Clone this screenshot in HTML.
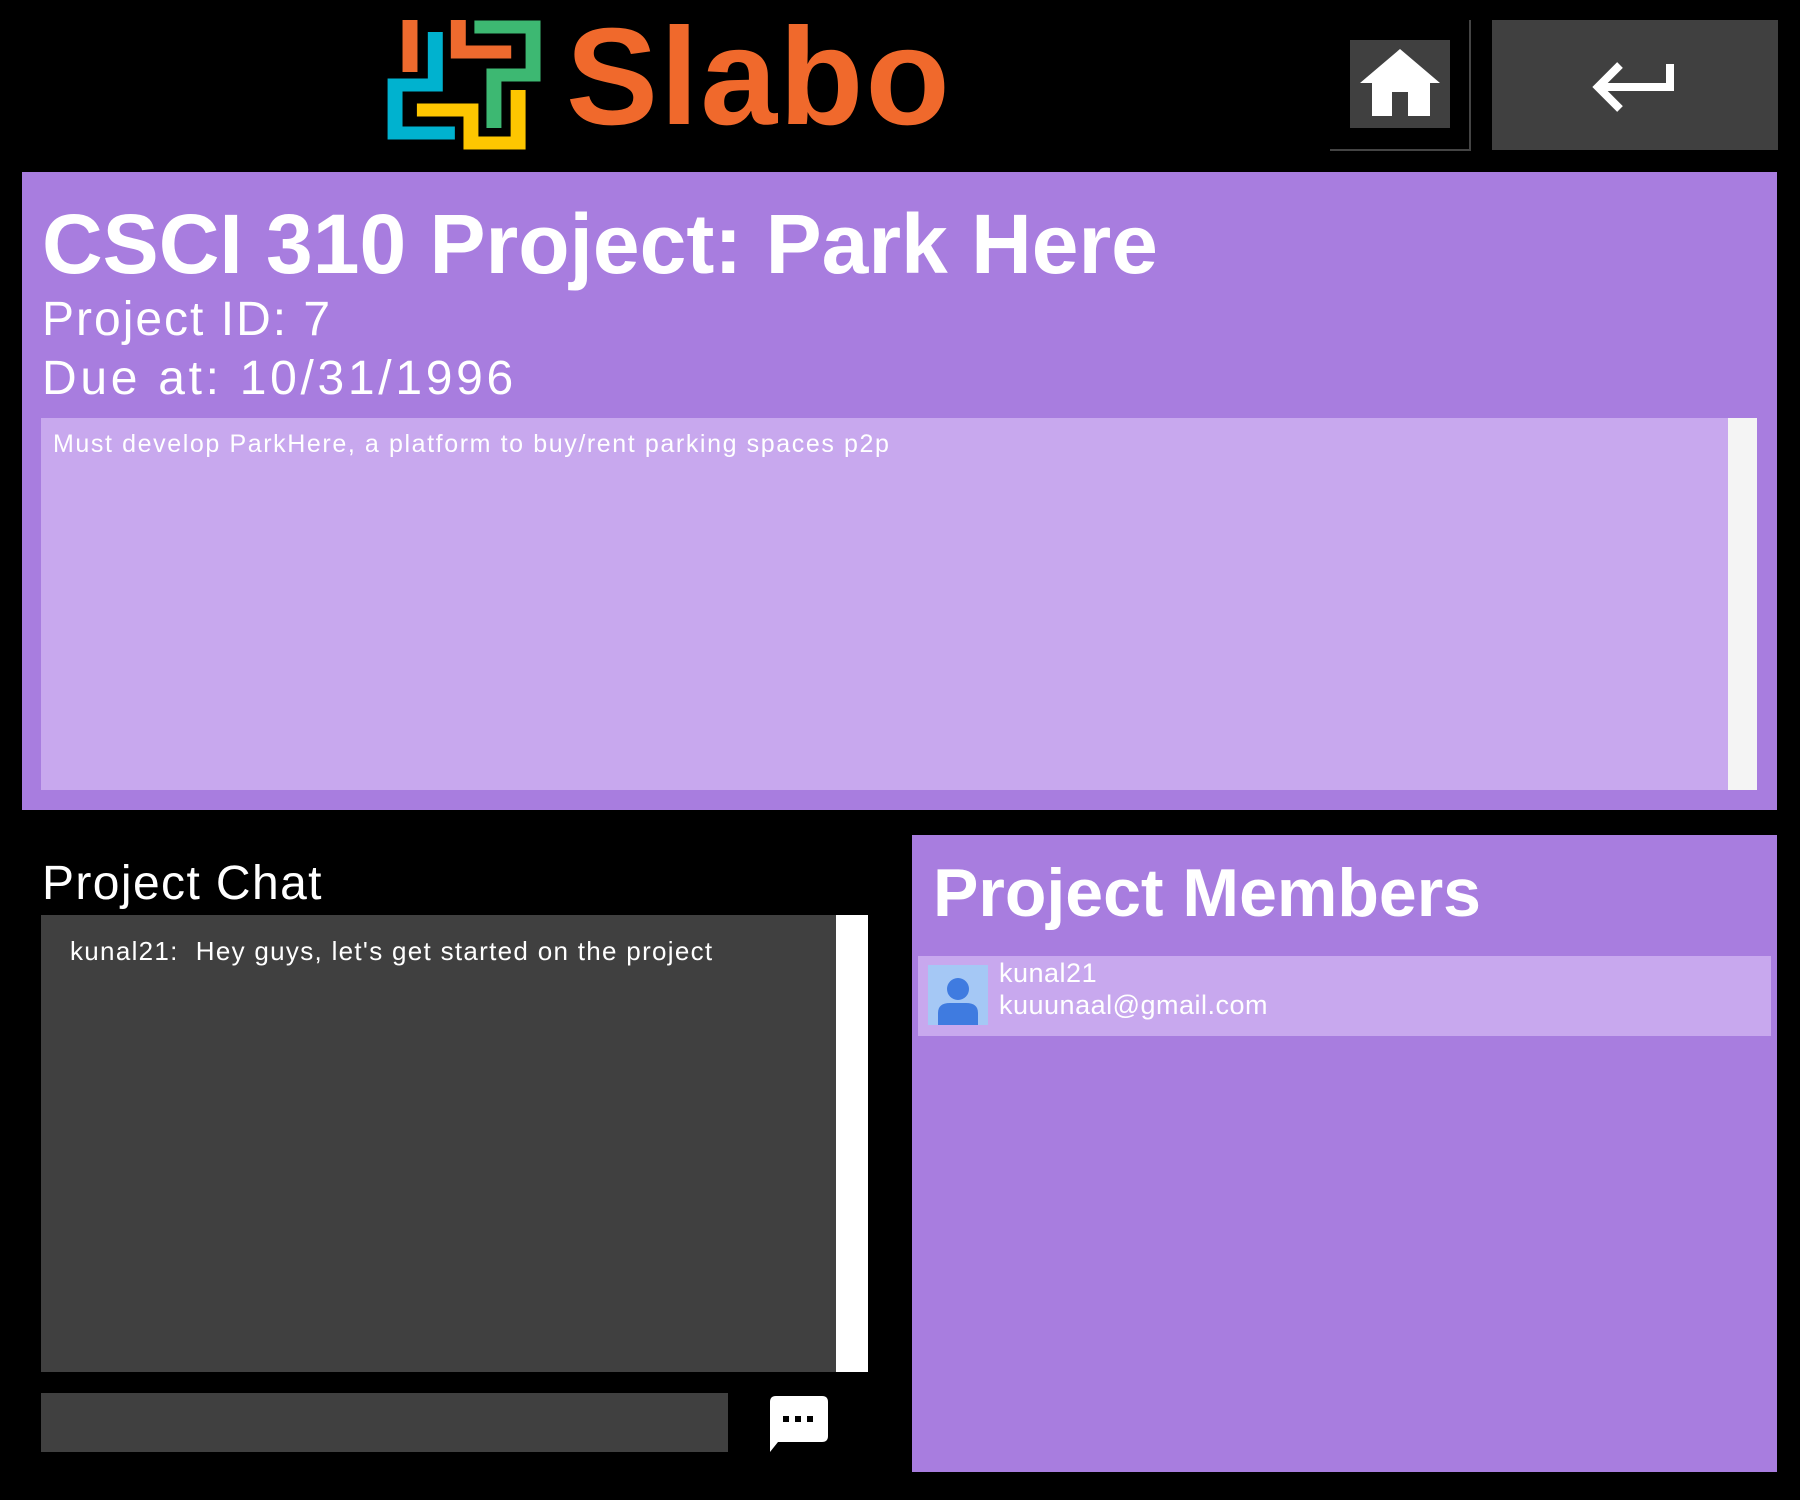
<!DOCTYPE html>
<html><head><meta charset="utf-8"><style>
*{margin:0;padding:0;box-sizing:border-box}
body{width:1800px;height:1500px;background:#000;position:relative;overflow:hidden;font-family:"Liberation Sans","DejaVu Sans",sans-serif;color:#fff}
.a{position:absolute}
</style></head><body>
<svg class="a" style="left:0;top:0" width="560" height="160">
<g fill="none" stroke-width="13" stroke-linejoin="miter" stroke-linecap="butt" transform="translate(387,0) scale(1.15,1) translate(-383,0)">
<path d="M403,20 V72" stroke="#ee6a2e"/>
<path d="M445,20 V52 H491" stroke="#ee6a2e"/>
<path d="M459,27 H510 V75 H476 V128" stroke="#3db872"/>
<path d="M425,32 V85 H390 V133 H442" stroke="#00b2cf"/>
<path d="M409,110 H456 V143 H497 V90" stroke="#fec600"/>
</g></svg>
<div class="a" style="left:566px;top:-2px;font-size:138px;font-weight:bold;color:#f0692c;letter-spacing:2px">Slabo</div>
<div class="a" style="left:1330px;top:149px;width:141px;height:2px;background:#444"></div>
<div class="a" style="left:1469px;top:20px;width:2px;height:130px;background:#444"></div>
<div class="a" style="left:1350px;top:40px;width:100px;height:88px;background:#404040"></div>
<svg class="a" style="left:1350px;top:40px" width="100" height="88"><path d="M50,9 L90,43 H80 V76 H58 V52 H42 V76 H22 V43 H10 Z" fill="#fff"/></svg>
<div class="a" style="left:1492px;top:20px;width:286px;height:130px;background:#404040"></div>
<svg class="a" style="left:1492px;top:20px" width="286" height="130"><path d="M178,44 V67 H106 M128,45 L106,67 L128,89" fill="none" stroke="#fff" stroke-width="8"/></svg>
<div class="a" style="left:22px;top:172px;width:1755px;height:638px;background:#a87ddf"></div>
<div class="a" style="left:42px;top:196px;font-size:84px;font-weight:bold;white-space:nowrap">CSCI 310 Project: Park Here</div>
<div class="a" style="left:42px;top:292px;font-size:48px;white-space:nowrap;letter-spacing:2px">Project ID: 7</div>
<div class="a" style="left:42px;top:351px;font-size:48px;white-space:nowrap;letter-spacing:3.7px">Due at: 10/31/1996</div>
<div class="a" style="left:41px;top:418px;width:1687px;height:372px;background:#c8a8ee"></div>
<div class="a" style="left:1728px;top:418px;width:29px;height:372px;background:#f4f4f4"></div>
<div class="a" style="left:53px;top:430px;font-size:25px;white-space:nowrap;letter-spacing:1.6px">Must develop ParkHere, a platform to buy/rent parking spaces p2p</div>
<div class="a" style="left:42px;top:856px;font-size:48px;white-space:nowrap;letter-spacing:1.4px">Project Chat</div>
<div class="a" style="left:41px;top:915px;width:795px;height:457px;background:#404040"></div>
<div class="a" style="left:836px;top:915px;width:32px;height:457px;background:#fff"></div>
<div class="a" style="left:70px;top:936px;font-size:26px;white-space:nowrap;letter-spacing:1.3px">kunal21:&nbsp; Hey guys, let's get started on the project</div>
<div class="a" style="left:41px;top:1393px;width:687px;height:59px;background:#404040"></div>
<svg class="a" style="left:766px;top:1394px" width="64" height="60"><path d="M6,2 H56 Q62,2 62,8 V42 Q62,48 56,48 H12 L4,58 V8 Q4,2 10,2 Z" fill="#fff"/><rect x="17" y="22" width="6" height="6" fill="#000"/><rect x="29" y="22" width="6" height="6" fill="#000"/><rect x="41" y="22" width="6" height="6" fill="#000"/></svg>
<div class="a" style="left:912px;top:835px;width:865px;height:637px;background:#a87ddf"></div>
<div class="a" style="left:933px;top:854px;font-size:68px;font-weight:bold;white-space:nowrap">Project Members</div>
<div class="a" style="left:918px;top:956px;width:853px;height:80px;background:#c8a8ee"></div>
<svg class="a" style="left:928px;top:965px" width="60" height="60"><rect width="60" height="60" fill="#a5c8f5"/><circle cx="30" cy="24" r="11" fill="#3f7be0"/><path d="M10,60 V48 Q10,38 22,38 H38 Q50,38 50,48 V60 Z" fill="#3f7be0"/></svg>
<div class="a" style="left:999px;top:958px;font-size:27px;white-space:nowrap;letter-spacing:0.5px">kunal21</div>
<div class="a" style="left:999px;top:990px;font-size:27px;white-space:nowrap;letter-spacing:0.5px">kuuunaal@gmail.com</div>
</body></html>
